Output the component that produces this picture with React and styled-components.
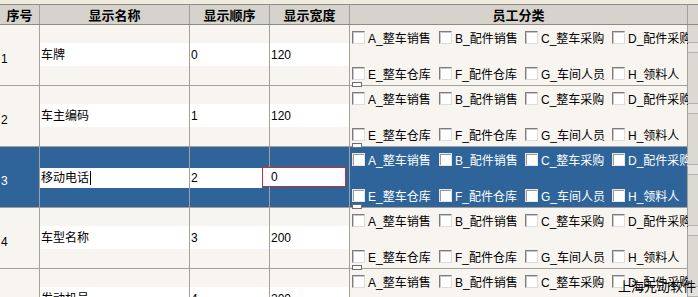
import React from 'react';
import styled, { createGlobalStyle } from 'styled-components';

const GlobalStyle = createGlobalStyle`
  body {
    margin: 0;
    background: #efebde;
    font-family: "Liberation Sans", "Noto Sans CJK SC", sans-serif;
  }
`;

const COLS = '40px 150px 80px 80px 338px 10px';
const LINE = '#a4a19b';
const BLUE = '#2e6499';

const Page = styled.div`
  position: relative;
  width: 698px;
  height: 297px;
  overflow: hidden;
  padding-top: 4px;
  box-sizing: border-box;
  background: #efebde;
`;

const HeadRow = styled.div`
  display: grid;
  grid-template-columns: ${COLS};
  height: 21px;
  box-sizing: border-box;
  border-top: 1px solid #8e8b85;
  border-bottom: 1px solid #8e8b85;
  background: #d6d3cd;
`;

const HeadCell = styled.div`
  border-right: 1px solid ${LINE};
  font-family: "Noto Sans CJK SC", sans-serif;
  font-weight: bold;
  font-size: 13px;
  line-height: 19px;
  text-align: center;
  color: #000;
  white-space: nowrap;
  overflow: hidden;
  &:last-child { border-right: none; }
`;

const Row = styled.div`
  display: grid;
  grid-template-columns: ${COLS};
  height: 61px;
  box-sizing: border-box;
  border-bottom: 1px solid ${LINE};
  background: ${p => (p.$selected ? BLUE : '#f8f5f1')};
`;

const Cell = styled.div`
  position: relative;
  border-right: 1px solid ${LINE};
  padding-top: ${p => (p.$selected ? 21 : 18)}px;
  box-sizing: border-box;
  overflow: visible;
`;

const NumCell = styled.div`
  border-right: 1px solid ${LINE};
  padding: 27px 0 0 1px;
  font-size: 12px;
  line-height: 14px;
  color: ${p => (p.$selected ? '#fff' : '#000')};
`;

const Band = styled.div`
  height: ${p => (p.$selected ? 20 : 23)}px;
  width: ${p => (p.$short ? 'calc(100% - 7px)' : '100%')};
  background: #fff;
  font-size: 12px;
  line-height: ${p => (p.$selected ? 21 : 25)}px;
  padding-left: 1px;
  box-sizing: border-box;
  color: #000;
  white-space: nowrap;
  overflow: hidden;
`;

const Caret = styled.span`
  display: inline-block;
  width: 1px;
  height: 14px;
  margin-left: 1px;
  vertical-align: -3px;
  background: #000;
`;

const Editor = styled.div`
  position: absolute;
  left: -8px;
  top: 20px;
  width: 84px;
  height: 20px;
  box-sizing: border-box;
  border: 1px solid #c0303a;
  background: #fff;
  font-size: 12px;
  line-height: 19px;
  padding-left: 8px;
  color: #000;
`;

const StaffCell = styled.div`
  border-right: 1px solid ${LINE};
  padding: 6px 0 0 2px;
  box-sizing: border-box;
`;

const CheckGrid = styled.div`
  display: grid;
  grid-template-columns: 87px 86px 87px auto;
  grid-template-rows: 13px 13px;
  row-gap: 23px;
`;

const CheckItem = styled.label`
  display: flex;
  align-items: center;
  gap: 3px;
  height: 13px;
  font-size: 12px;
  white-space: nowrap;
  color: ${p => (p.$selected ? '#fff' : '#000')};
`;

const Box = styled.span`
  flex: none;
  width: 13px;
  height: 13px;
  box-sizing: border-box;
  background: #fff;
  border-top: 1px solid ${p => (p.$selected ? '#e6e6e6' : '#7c7c7c')};
  border-left: 1px solid ${p => (p.$selected ? '#e6e6e6' : '#7c7c7c')};
  border-right: 1px solid ${p => (p.$selected ? '#e6e6e6' : '#dcdcdc')};
  border-bottom: 1px solid ${p => (p.$selected ? '#e6e6e6' : '#dcdcdc')};
  box-shadow: inset 1px 1px ${p => (p.$selected ? '#9a9a9a' : '#c8c8c8')};
`;

const Grip = styled.div`
  width: 8px;
  height: 3px;
  margin-top: 2px;
  border: 1px solid #6d6d6d;
  background: #fff;
`;

const EdgeCell = styled.div`
  background: #dcd9d3;
  border-top: none;
  padding-top: 17px;
`;

const EdgeBar = styled.div`
  height: 9px;
  border-top: 1px solid #b5b2ac;
  border-bottom: 1px solid #b5b2ac;
  background: #e6e3de;
`;

const Watermark = styled.div`
  position: absolute;
  right: 2px;
  bottom: 4px;
  font-family: "Noto Sans CJK SC", sans-serif;
  font-size: 13px;
  line-height: 15px;
  color: #000;
`;

const staff = [
  'A_整车销售', 'B_配件销售', 'C_整车采购', 'D_配件采购',
  'E_整车仓库', 'F_配件仓库', 'G_车间人员', 'H_领料人',
];

const rows = [
  { no: 1, name: '车牌', order: '0', width: '120' },
  { no: 2, name: '车主编码', order: '1', width: '120' },
  { no: 3, name: '移动电话', order: '2', width: '0', selected: true },
  { no: 4, name: '车型名称', order: '3', width: '200' },
  { no: 5, name: '发动机号', order: '4', width: '200' },
];

const StaffChecks = ({ selected }) => (
  <StaffCell>
    <CheckGrid>
      {staff.map(s => (
        <CheckItem key={s} $selected={selected}>
          <Box $selected={selected} />
          {s}
        </CheckItem>
      ))}
    </CheckGrid>
    <Grip />
  </StaffCell>
);

const GridRow = ({ row }) => {
  const sel = !!row.selected;
  return (
    <Row $selected={sel}>
      <NumCell $selected={sel}>{row.no}</NumCell>
      <Cell $selected={sel}>
        <Band $selected={sel}>
          {row.name}
          {sel && <Caret />}
        </Band>
      </Cell>
      <Cell $selected={sel}>
        <Band $selected={sel} $short={sel}>{row.order}</Band>
      </Cell>
      <Cell $selected={sel}>
        {sel ? <Editor>{row.width}</Editor> : <Band>{row.width}</Band>}
      </Cell>
      <StaffChecks selected={sel} />
      <EdgeCell>
        <EdgeBar />
      </EdgeCell>
    </Row>
  );
};

export default function App() {
  return (
    <Page>
      <GlobalStyle />
      <HeadRow>
        <HeadCell>序号</HeadCell>
        <HeadCell>显示名称</HeadCell>
        <HeadCell>显示顺序</HeadCell>
        <HeadCell>显示宽度</HeadCell>
        <HeadCell>员工分类</HeadCell>
        <HeadCell />
      </HeadRow>
      {rows.map(r => (
        <GridRow key={r.no} row={r} />
      ))}
      <Watermark>上海元动软件</Watermark>
    </Page>
  );
}
